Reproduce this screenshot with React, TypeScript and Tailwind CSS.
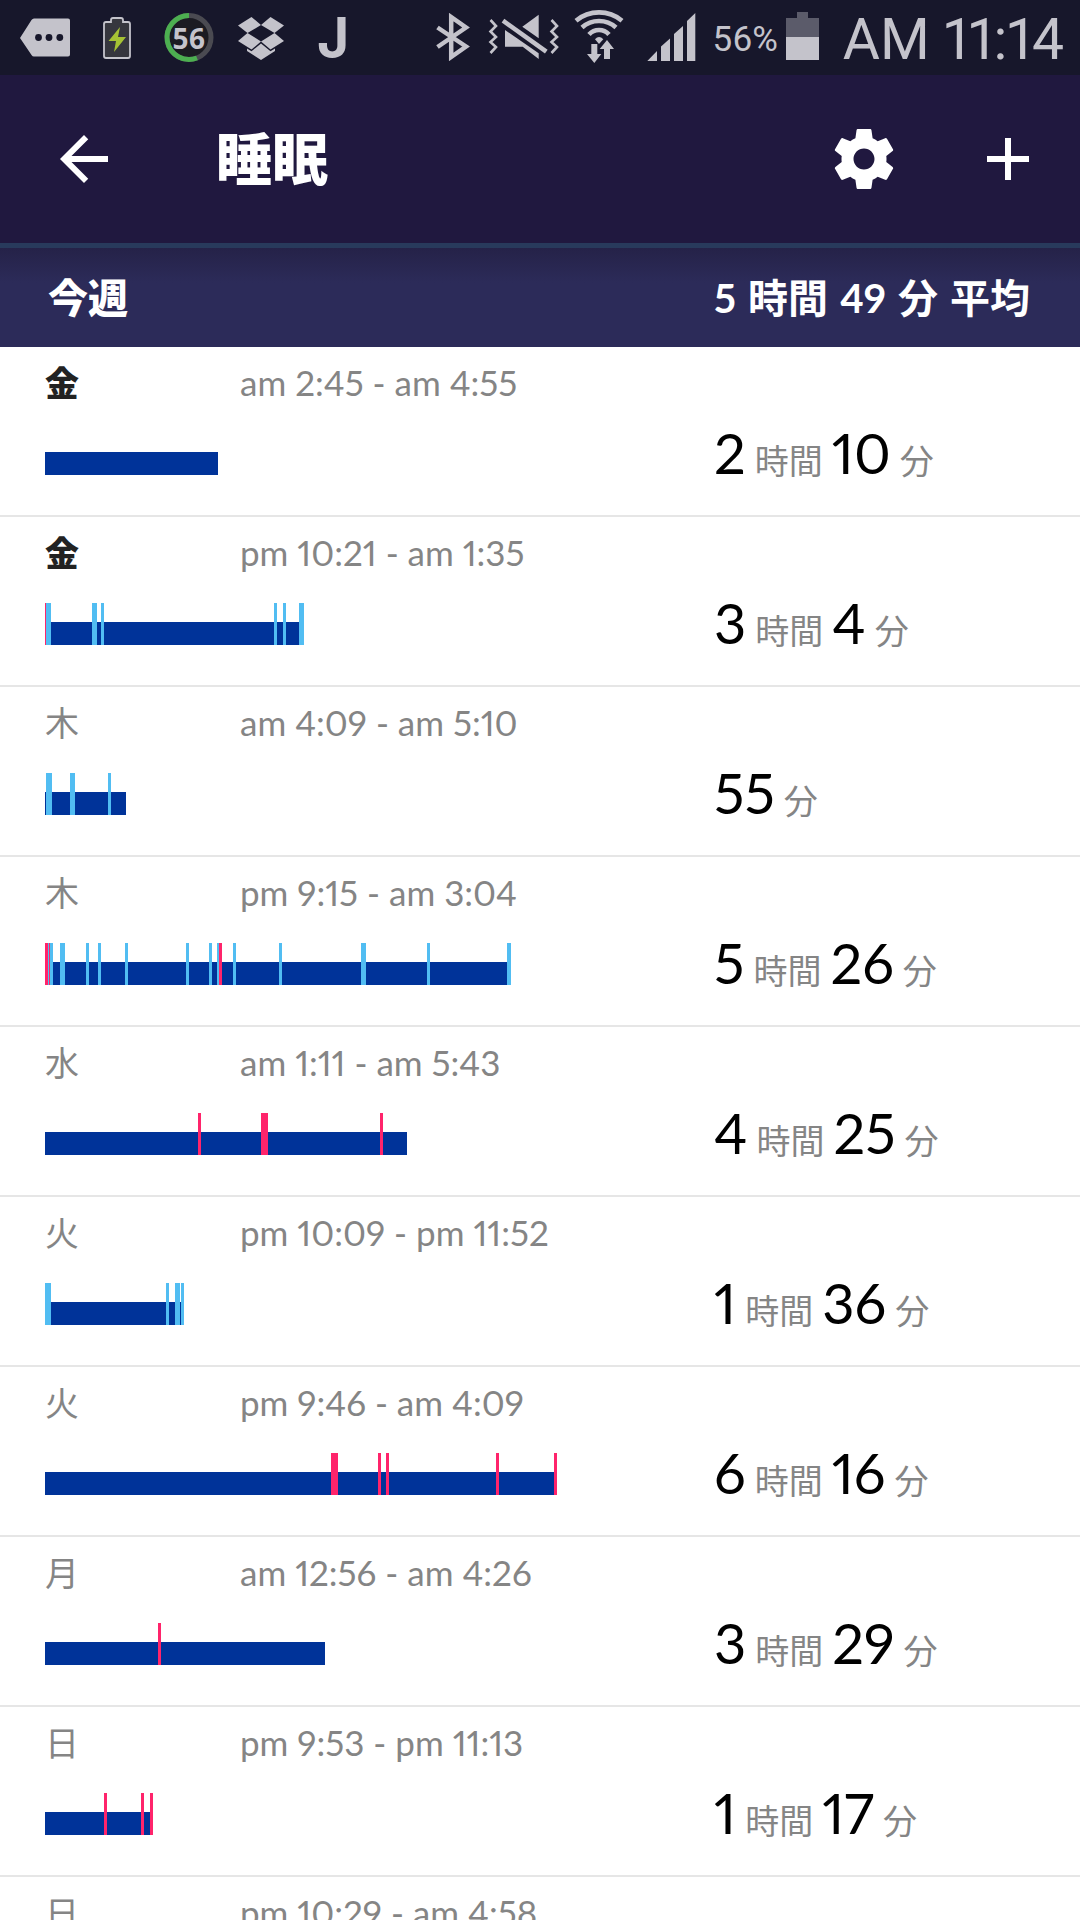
import clsx from 'clsx';
import { MdAdd, MdArrowBack } from 'react-icons/md';

type Tick = { at: number; width: number; kind: 'restless' | 'awake' };

type SleepLog = {
  day: string;
  today?: boolean;
  time: string;
  hours?: number;
  minutes?: number;
  length?: number;
  ticks?: Tick[];
};

const restless = (at: number, width: number = 3): Tick => ({ at, width, kind: 'restless' });
const awake = (at: number, width: number = 3): Tick => ({ at, width, kind: 'awake' });

const logs: SleepLog[] = [
  { day: '金', today: true, time: 'am 2:45 - am 4:55', hours: 2, minutes: 10, length: 173 },
  {
    day: '金',
    today: true,
    time: 'pm 10:21 - am 1:35',
    hours: 3,
    minutes: 4,
    length: 259,
    ticks: [
      awake(0, 1),
      restless(1, 5),
      restless(47, 5),
      restless(56),
      restless(229),
      restless(238),
      restless(254, 5),
    ],
  },
  {
    day: '木',
    time: 'am 4:09 - am 5:10',
    minutes: 55,
    length: 81,
    ticks: [restless(1, 6), restless(25, 5), restless(63)],
  },
  {
    day: '木',
    time: 'pm 9:15 - am 3:04',
    hours: 5,
    minutes: 26,
    length: 466,
    ticks: [
      restless(0, 8),
      awake(0),
      awake(4, 1),
      restless(15, 5),
      restless(41),
      restless(53),
      restless(80),
      restless(141),
      restless(164),
      restless(172, 2),
      awake(174),
      restless(188),
      restless(234),
      restless(316, 5),
      restless(382),
      restless(462, 4),
    ],
  },
  {
    day: '水',
    time: 'am 1:11 - am 5:43',
    hours: 4,
    minutes: 25,
    length: 362,
    ticks: [awake(153), awake(216, 7), awake(335)],
  },
  {
    day: '火',
    time: 'pm 10:09 - pm 11:52',
    hours: 1,
    minutes: 36,
    length: 139,
    ticks: [restless(0, 6), restless(121), restless(130, 5), restless(136)],
  },
  {
    day: '火',
    time: 'pm 9:46 - am 4:09',
    hours: 6,
    minutes: 16,
    length: 512,
    ticks: [awake(286, 7), awake(333), awake(341), awake(451), awake(509)],
  },
  {
    day: '月',
    time: 'am 12:56 - am 4:26',
    hours: 3,
    minutes: 29,
    length: 280,
    ticks: [awake(113)],
  },
  {
    day: '日',
    time: 'pm 9:53 - pm 11:13',
    hours: 1,
    minutes: 17,
    length: 108,
    ticks: [awake(59), awake(96), awake(105)],
  },
  { day: '日', time: 'pm 10:29 - am 4:58' },
];

function SettingsIcon({ className }: { className?: string }) {
  return (
    <svg className={className} viewBox="0 0 24 24" fill="currentColor">
      <path d="M19.43 12.98c.04-.32.07-.64.07-.98s-.03-.66-.07-.98l2.11-1.65c.19-.15.24-.42.12-.64l-2-3.46c-.12-.22-.39-.3-.61-.22l-2.490 1c-.52-.4-1.080-.73-1.690-.98l-.38-2.650C14.460 2.180 14.250 2 14 2h-4c-.25 0-.46.18-.49.42l-.38 2.650c-.61.25-1.170.59-1.690.98l-2.490-1c-.23-.09-.49 0-.61.22l-2 3.460c-.13.22-.07.49.12.64l2.110 1.650c-.04.32-.07.65-.07.98s.03.66.07.98l-2.110 1.650c-.19.15-.24.42-.12.64l2 3.460c.12.22.39.3.61.22l2.490-1c.52.4 1.080.73 1.690.98l.38 2.650c.03.24.24.42.49.42h4c.25 0 .46-.18.49-.42l.38-2.650c.61-.25 1.170-.59 1.690-.98l2.490 1c.23.09.49 0 .61-.22l2-3.460c.12-.22.07-.49-.12-.64l-2.110-1.650zM12 15.500c-1.930 0-3.500-1.570-3.500-3.500s1.570-3.500 3.500-3.500 3.500 1.570 3.500 3.500-1.570 3.500-3.500 3.500z" />
    </svg>
  );
}

function StatusBar() {
  return (
    <div className="flex h-[75px] shrink-0 items-center justify-between bg-[#17172b] pr-4 pl-[9px] font-['Roboto',sans-serif] text-[#c4c3cb]">
      <div className="flex items-center">
        <svg className="h-[75px] w-[72px]" viewBox="0 0 72 75" fill="currentColor">
          <path d="M11 38 22.500 20Q23.500 18.500 25 18.500H59Q61 18.500 61 20.500V54.500Q61 56.500 59 56.500H25Q23.500 56.500 22.500 55Z" />
          <g fill="#17172b">
            <circle cx="29.500" cy="37.500" r="3.400" />
            <circle cx="40" cy="37.500" r="3.400" />
            <circle cx="50.800" cy="37.500" r="3.400" />
          </g>
        </svg>
        <svg className="h-[75px] w-[72px]" viewBox="0 0 72 75">
          <path
            d="M25 22H30V20Q30 18 32 18H40Q42 18 42 20V22H47Q49 22 49 24V56Q49 58 47 58H25Q23 58 23 56V24Q23 22 25 22Z"
            fill="#36363e"
            stroke="#c4c3cb"
            strokeWidth="1.800"
          />
          <path d="M39 27 27.500 41H35L33 52 45 37H37Z" fill="#a6c234" />
        </svg>
        <div className="relative grid h-[75px] w-[72px] place-items-center">
          <svg className="absolute inset-0" viewBox="0 0 72 75" fill="none">
            <circle cx="36" cy="37.500" r="22" fill="#1b1b22" stroke="#4a4a51" strokeWidth="5" />
            <path d="M36 15.500A22 22 0 1 0 44 58" stroke="#4caf50" strokeWidth="5" />
          </svg>
          <span className="relative font-['Open_Sans',sans-serif] text-[28px] leading-none font-bold">
            56
          </span>
        </div>
        <svg className="h-[75px] w-[72px]" viewBox="0 0 72 75" fill="currentColor">
          <path d="M26.500 17 13 25.500 22.500 33 36 25ZM45.500 17 36 25 49.500 33 59 25.500ZM22.500 33 13 41 26.500 49.500 36 41.500ZM49.500 33 36 41.500 45.500 49.500 59 41Z" />
          <path d="M36 43.500 26.500 51.200 22 48.500V51L36 60 50 51V48.500L45.500 51.200Z" />
        </svg>
        <span className="w-[72px] text-center font-['Inter',sans-serif] text-[55px] leading-none font-bold">
          J
        </span>
      </div>

      <div className="flex items-center">
        <svg className="h-[75px] w-[72px]" viewBox="0 0 72 75" fill="none" stroke="currentColor">
          <path d="M21.500 27.500 50 46.500 35.200 57V17L50 27.500 21.500 47" strokeWidth="4.500" />
        </svg>
        <svg className="h-[75px] w-[73px]" viewBox="0 0 73 75" fill="currentColor">
          <path d="M50.700 14.700V38.300L34.300 26.700ZM17 30 50.700 53.300V59L34.700 46.700H17Z" />
          <path
            d="M15 20.700 58.300 51.700"
            stroke="currentColor"
            strokeWidth="4.600"
          />
          <path
            d="M2.500 20 8 26 2.500 31.500 8 37 2.500 42 8 47 2.500 53M63.500 20 69 26 63.500 31.500 69 37 63.500 42 69 47 63.500 53"
            fill="none"
            stroke="currentColor"
            strokeWidth="2.600"
          />
        </svg>
        <svg className="h-[75px] w-[76px]" viewBox="0 0 76 75" fill="none" stroke="currentColor">
          <g strokeWidth="4.600">
            <path d="M15 20.700A36 36 0 0 1 61 20.700" />
            <path d="M21 27.500A25.500 25.500 0 0 1 55 27.500" />
            <path d="M28 34.500A13.500 13.500 0 0 1 48 34.500" />
          </g>
          <g fill="currentColor" stroke="none">
            <path d="M34 39.300Q38 34.500 42.300 39.300L38 44Z" />
            <path d="M30.300 44H36.300V54H40.300L33.300 63 26 54H30.300Z" />
            <path d="M43 59H49V49H53L46 40 38.700 49H43Z" />
          </g>
        </svg>
        <svg className="h-[75px] w-[72px]" viewBox="0 0 72 75" fill="currentColor">
          <path d="M10.300 61 20 51V61ZM24 46.500 33 38.500V61H24ZM37 34 46 26V61H37ZM50 21 58.300 13V61H50Z" />
        </svg>
        <span className="ml-1 pt-1 text-[35px] leading-none">56%</span>
        <svg className="ml-2 h-[75px] w-[33px]" viewBox="0 0 33 75" fill="currentColor">
          <path d="M11 12H22V18H33V37H0V18H11Z" opacity="0.400" />
          <path d="M0 37H33V60H0Z" />
        </svg>
        <span className="ml-6 pt-1 text-[57px] leading-none">AM 11:14</span>
      </div>
    </div>
  );
}

function SleepChart({ length, ticks = [] }: { length: number; ticks?: Tick[] }) {
  return (
    <svg width={length} height={42} shapeRendering="crispEdges">
      <rect y={19} width={length} height={23} className="fill-[#003399]" />
      {ticks.map((tick, i) => (
        <rect
          key={i}
          x={tick.at}
          width={tick.width}
          height={42}
          className={tick.kind === 'awake' ? 'fill-[#ff246b]' : 'fill-[#51bdf2]'}
        />
      ))}
    </svg>
  );
}

function SleepRow({ log }: { log: SleepLog }) {
  return (
    <li className="flex h-[170px] border-b-2 border-[#e6e6e6] pl-[45px] text-[34px] leading-10 text-[#858585]">
      <div className="flex flex-1 flex-col pt-[15px]">
        <div className="flex items-baseline">
          <span className={clsx('w-[195px]', log.today && 'font-black text-[#222222]')}>
            {log.day}
          </span>
          <span className="text-[35px]">{log.time}</span>
        </div>
        <div className="mt-[30px]">
          {log.length && <SleepChart length={log.length} ticks={log.ticks} />}
        </div>
      </div>
      <div className="flex w-[366px] items-baseline gap-[9px] pt-[74px] leading-[64px]">
        {log.hours && (
          <>
            <span className="text-[56px] text-black">{log.hours}</span>
            <span>時間</span>
          </>
        )}
        {log.minutes && (
          <>
            <span className="text-[56px] text-black">{log.minutes}</span>
            <span>分</span>
          </>
        )}
      </div>
    </li>
  );
}

export default function App() {
  return (
    <div
      lang="ja"
      className="flex h-screen flex-col overflow-hidden bg-white font-['Lato','Noto_Sans_CJK_JP',sans-serif] proportional-nums"
    >
      <StatusBar />
      <header className="flex h-[173px] shrink-0 items-center border-b-[5px] border-[#283a5c] bg-[#20183f] pr-9 pl-12 text-white">
        <button type="button" aria-label="戻る">
          <MdArrowBack className="size-[72px]" />
        </button>
        <h1 className="ml-24 flex-1 text-[56px] leading-none font-black">睡眠</h1>
        <div className="flex gap-[72px]">
          <button type="button" aria-label="設定">
            <SettingsIcon className="size-[72px]" />
          </button>
          <button type="button" aria-label="追加">
            <MdAdd className="size-[72px]" />
          </button>
        </div>
      </header>
      <main className="flex-1 overflow-y-auto [scrollbar-width:none]">
        <div className="flex h-[99px] items-center bg-linear-to-b from-[#252248] to-[#2c2b59] to-35% pl-12 text-[40px] font-bold text-white">
          <h2 className="flex-1 font-black">今週</h2>
          <p className="flex w-[366px] gap-3">
            <span>5</span>
            <span>時間</span>
            <span>49</span>
            <span>分</span>
            <span>平均</span>
          </p>
        </div>
        <ul>
          {logs.map((log, i) => (
            <SleepRow key={i} log={log} />
          ))}
        </ul>
      </main>
    </div>
  );
}
